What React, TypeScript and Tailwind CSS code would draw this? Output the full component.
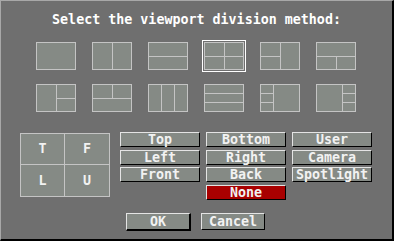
import React from "react";

const LINE = "#c4c4c4";
const FILL = "#858a85";

type Split = { v?: number[]; h?: number[]; seg?: [number, number, number, number][] };

// each thumb is a 40x28 drawing: outer box plus internal division lines
const layouts: Split[] = [
  {},
  { v: [20] },
  { h: [14] },
  { v: [20], h: [14] },
  { v: [20], seg: [[0, 14, 20, 14]] },
  { h: [14], seg: [[20, 14, 20, 28]] },
  { v: [20], seg: [[20, 14, 40, 14]] },
  { h: [14], seg: [[20, 0, 20, 14]] },
  { v: [13, 26] },
  { h: [9, 18] },
  { v: [13], seg: [[0, 9, 13, 9], [0, 18, 13, 18]] },
  { v: [26], seg: [[26, 9, 40, 9], [26, 18, 40, 18]] },
];

function Thumb({ layout, selected }: { layout: Split; selected?: boolean }) {
  const lines: [number, number, number, number][] = [
    ...(layout.v ?? []).map((x) => [x, 0, x, 28] as [number, number, number, number]),
    ...(layout.h ?? []).map((y) => [0, y, 40, y] as [number, number, number, number]),
    ...(layout.seg ?? []),
  ];
  return (
    <div className={selected ? "h-[28px] w-[40px] outline outline-1 outline-offset-1 outline-white" : "h-[28px] w-[40px]"}>
      <svg width="40" height="28" viewBox="0 0 40 28" shapeRendering="crispEdges" className="block">
        <rect x="0.5" y="0.5" width="39" height="27" fill={FILL} stroke={LINE} strokeWidth="1" />
        {lines.map(([x1, y1, x2, y2], i) => (
          <line key={i} x1={x1 + (x1 === x2 ? 0.5 : 0)} y1={y1 + (y1 === y2 ? 0.5 : 0)} x2={x2 + (x1 === x2 ? 0.5 : 0)} y2={y2 + (y1 === y2 ? 0.5 : 0)} stroke={LINE} strokeWidth="1" />
        ))}
      </svg>
    </div>
  );
}

function Btn({ label, red }: { label: string; red?: boolean }) {
  return (
    <div
      className={`flex h-[15px] items-center justify-center border-t border-l border-r border-b border-t-[#e4e4e4] border-l-[#e4e4e4] border-r-black border-b-black text-[13.33px] leading-none font-bold text-[#f2f2f2] ${
        red ? "bg-[#a80000]" : "bg-[#858a85]"
      }`}
    >
      {label}
    </div>
  );
}

export default function App() {
  return (
    <div
      className="flex h-[241px] w-[394px] flex-col border-t border-l border-r-2 border-b-2 border-t-[#a8a8a8] border-l-[#a8a8a8] border-r-black border-b-black bg-[#6f6f6f]"
      style={{ fontFamily: '"DejaVu Sans Mono", "Liberation Mono", monospace' }}
    >
      <p className="mt-[11px] h-[16px] text-center text-[13.33px] leading-[16px] font-bold text-white">
        Select the viewport division method:
      </p>

      <div className="mt-[14px] ml-[35px] grid grid-cols-[repeat(6,40px)] gap-x-[16px] gap-y-[14px]">
        {layouts.map((l, i) => (
          <Thumb key={i} layout={l} selected={i === 3} />
        ))}
      </div>

      <div className="mt-[20px] flex">
        <div className="mt-[1px] ml-[19px] grid h-[64px] w-[90px] grid-cols-2 grid-rows-2 border border-[#c4c4c4] bg-[#858a85] text-[13.33px] font-bold text-[#f2f2f2]">
          <div className="flex items-center justify-center border-r border-b border-[#c4c4c4]">T</div>
          <div className="flex items-center justify-center border-b border-[#c4c4c4]">F</div>
          <div className="flex items-center justify-center border-r border-[#c4c4c4]">L</div>
          <div className="flex items-center justify-center">U</div>
        </div>
        <div className="ml-[10px] grid grid-cols-[repeat(3,80px)] gap-x-[6px] gap-y-[2.67px]">
          <Btn label="Top" />
          <Btn label="Bottom" />
          <Btn label="User" />
          <Btn label="Left" />
          <Btn label="Right" />
          <Btn label="Camera" />
          <Btn label="Front" />
          <Btn label="Back" />
          <Btn label="Spotlight" />
          <div />
          <Btn label="None" red />
        </div>
      </div>

      <div className="mt-[13px] flex">
        <div className="ml-[125px] flex h-[18px] w-[65px] items-center justify-center border-t border-l border-r-2 border-b-2 border-t-[#e4e4e4] border-l-[#e4e4e4] border-r-black border-b-black bg-[#858a85] text-[13.33px] leading-none font-bold text-[#f2f2f2]">
          OK
        </div>
        <div className="ml-[10px] flex h-[17px] w-[64px] items-center justify-center border-t border-l border-r border-b border-t-[#e4e4e4] border-l-[#e4e4e4] border-r-black border-b-black bg-[#858a85] text-[13.33px] leading-none font-bold text-[#f2f2f2]">
          Cancel
        </div>
      </div>
    </div>
  );
}
